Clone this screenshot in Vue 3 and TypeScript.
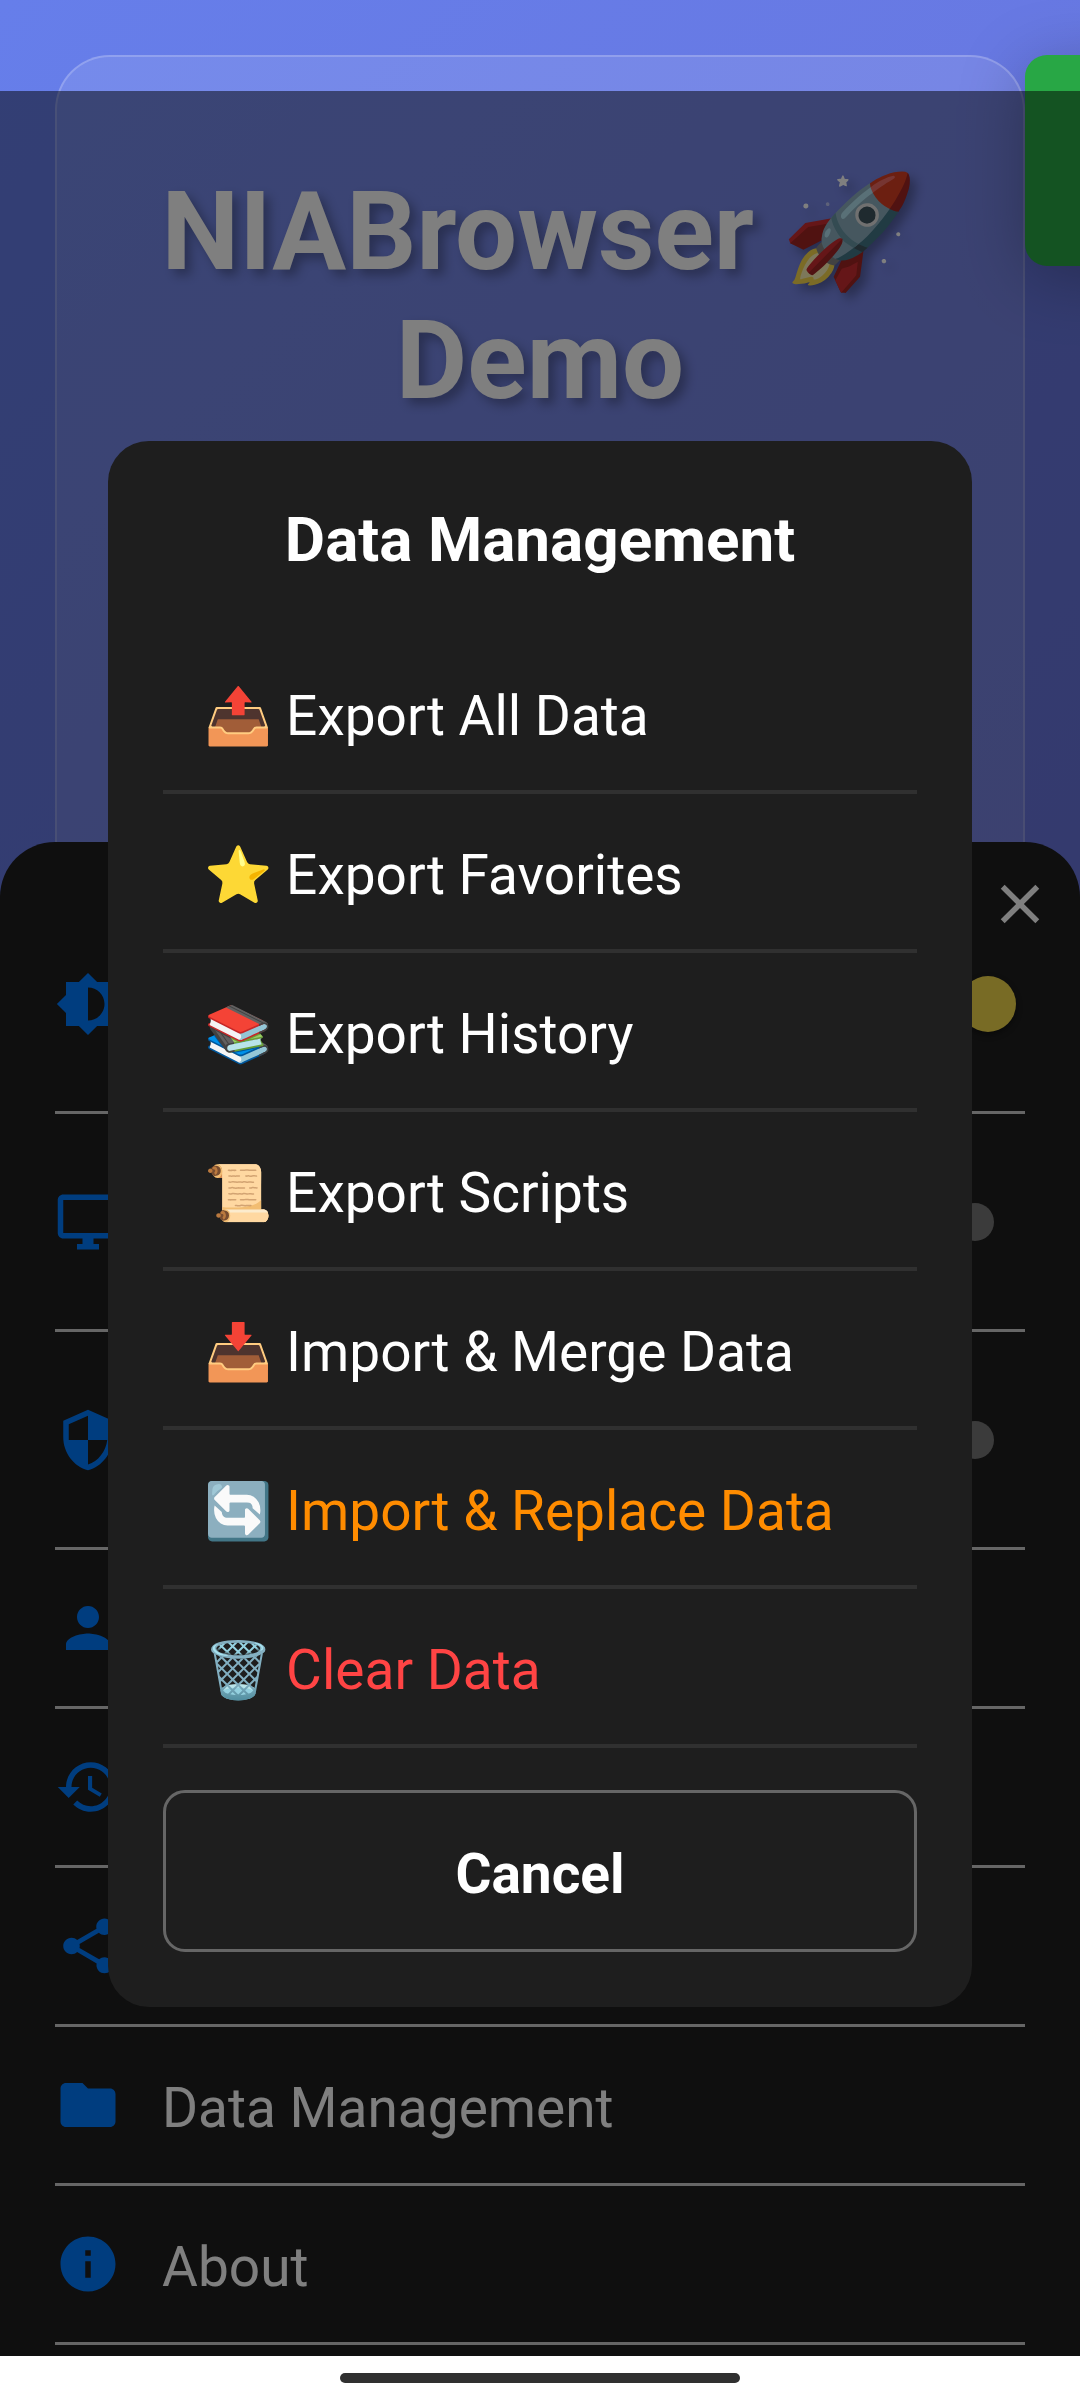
<script setup lang="ts">
interface SheetRow {
  name: string
  icon: string
  toggle?: 'on' | 'off'
  label?: string
}

interface DataAction {
  emoji: string
  label: string
  tone?: 'warn' | 'danger'
}

const rows: SheetRow[] = [
  {
    name: 'Brightness',
    toggle: 'on',
    icon: 'M20 15.31L23.31 12 20 8.69V4h-4.69L12 .69 8.69 4H4v4.69L.69 12 4 15.31V20h4.69L12 23.31 15.31 20H20v-4.69zM12 18V6c3.31 0 6 2.69 6 6s-2.69 6-6 6z',
  },
  {
    name: 'Desktop',
    toggle: 'off',
    icon: 'M21 2H3c-1.1 0-2 .9-2 2v12c0 1.1.9 2 2 2h7v2H8v2h8v-2h-2v-2h7c1.1 0 2-.9 2-2V4c0-1.1-.9-2-2-2zm0 14H3V4h18v12z',
  },
  {
    name: 'Security',
    toggle: 'off',
    icon: 'M12 1L3 5v6c0 5.55 3.84 10.74 9 12 5.16-1.26 9-6.45 9-12V5l-9-4zm0 10.99h7c-.53 4.12-3.28 7.79-7 8.94V12H5V6.3l7-3.11v8.8z',
  },
  {
    name: 'Person',
    icon: 'M12 12c2.21 0 4-1.79 4-4s-1.79-4-4-4-4 1.79-4 4 1.79 4 4 4zm0 2c-2.67 0-8 1.34-8 4v2h16v-2c0-2.66-5.33-4-8-4z',
  },
  {
    name: 'History',
    icon: 'M13 3c-4.97 0-9 4.03-9 9H1l3.89 3.89.07.14L9 12H6c0-3.87 3.13-7 7-7s7 3.13 7 7-3.13 7-7 7c-1.93 0-3.68-.79-4.94-2.06l-1.42 1.42C8.27 19.99 10.51 21 13 21c4.97 0 9-4.03 9-9s-4.03-9-9-9zm-1 5v5l4.28 2.54.72-1.21-3.5-2.08V8H12z',
  },
  {
    name: 'Share',
    icon: 'M18 16.08c-.76 0-1.44.3-1.96.77L8.91 12.7c.05-.23.09-.46.09-.7s-.04-.47-.09-.7l7.05-4.11c.54.5 1.25.81 2.04.81 1.66 0 3-1.34 3-3s-1.34-3-3-3-3 1.34-3 3c0 .24.04.47.09.7L8.04 9.81C7.5 9.31 6.79 9 6 9c-1.66 0-3 1.34-3 3s1.34 3 3 3c.79 0 1.5-.31 2.04-.81l7.12 4.16c-.05.21-.08.43-.08.65 0 1.61 1.31 2.92 2.92 2.92s2.92-1.31 2.92-2.92-1.31-2.92-2.92-2.92z',
  },
  {
    name: 'Data Management',
    label: 'Data Management',
    icon: 'M10 4H4c-1.1 0-1.99.9-1.99 2L2 18c0 1.1.9 2 2 2h16c1.1 0 2-.9 2-2V8c0-1.1-.9-2-2-2h-8l-2-2z',
  },
  {
    name: 'About',
    label: 'About',
    icon: 'M12 2C6.48 2 2 6.48 2 12s4.48 10 10 10 10-4.48 10-10S17.52 2 12 2zm1 15h-2v-6h2v6zm0-8h-2V7h2v2z',
  },
]

const actions: DataAction[] = [
  { emoji: '📤', label: 'Export All Data' },
  { emoji: '⭐', label: 'Export Favorites' },
  { emoji: '📚', label: 'Export History' },
  { emoji: '📜', label: 'Export Scripts' },
  { emoji: '📥', label: 'Import & Merge Data' },
  { emoji: '🔄', label: 'Import & Replace Data', tone: 'warn' },
  { emoji: '🗑️', label: 'Clear Data', tone: 'danger' },
]
</script>

<template>
  <div class="screen">
    <div class="stage">
      <main class="web">
        <section class="card">
          <h1>NIABrowser 🚀 Demo</h1>
        </section>
        <div class="status"></div>
      </main>

      <section class="sheet">
        <button class="close" type="button" aria-label="Close">
          <svg class="icon" viewBox="0 0 24 24"><path d="M19 6.41L17.59 5 12 10.59 6.41 5 5 6.41 10.59 12 5 17.59 6.41 19 12 13.41 17.59 19 19 17.59 13.41 12z" /></svg>
        </button>
        <template v-for="row in rows" :key="row.name">
          <label v-if="row.toggle" class="row tall">
            <svg class="icon" viewBox="0 0 24 24"><path :d="row.icon" /></svg>
            <input
              class="switch"
              type="checkbox"
              role="switch"
              :aria-label="row.name"
              :checked="row.toggle === 'on'"
            />
          </label>
          <button v-else class="row" type="button" :aria-label="row.name">
            <svg class="icon" viewBox="0 0 24 24"><path :d="row.icon" /></svg>
            <span v-if="row.label">{{ row.label }}</span>
          </button>
        </template>
      </section>

      <div class="overlay">
        <div class="dialog" role="dialog" aria-modal="true" aria-labelledby="dialog-title">
          <h2 id="dialog-title">Data Management</h2>
          <ul>
            <li v-for="action in actions" :key="action.label">
              <button class="action" :class="action.tone" type="button">{{ action.emoji }} {{ action.label }}</button>
            </li>
          </ul>
          <button class="cancel" type="button">Cancel</button>
        </div>
      </div>
    </div>
    <div class="navbar"><div class="handle"></div></div>
  </div>
</template>

<style>
body {
  margin: 0;
  background: #fff;
}
</style>

<style scoped>
.screen {
  display: flex;
  flex-direction: column;
  min-height: 100vh;
  font-family: Roboto, "Noto Color Emoji", sans-serif;
  overflow: hidden;
}

button {
  font: inherit;
  color: inherit;
  background: none;
  border: 0;
  padding: 0;
  margin: 0;
}

.stage {
  flex: 1;
  display: grid;
  grid-template-columns: minmax(0, 1fr);
  overflow: hidden;
  background: linear-gradient(135deg, #667eea, #764ba2) no-repeat 0 0 / 100% 9500px;
}

.stage > * {
  grid-area: 1 / 1;
}

.web {
  position: relative;
  display: flex;
  padding: 55px 55px 0;
}

.card {
  flex: 1;
  padding: 110px 82px;
  border: 2px solid rgba(255, 255, 255, 0.2);
  border-radius: 55px;
  background: rgba(255, 255, 255, 0.1);
}

h1 {
  margin: 0;
  font-size: 110px;
  line-height: 129px;
  font-weight: 700;
  text-align: center;
  color: #fff;
  text-shadow: 6px 6px 11px rgba(0, 0, 0, 0.3);
}

/* Notification sliding in from the right edge */
.status {
  position: absolute;
  top: 55px;
  left: calc(100% - 55px);
  width: 220px;
  height: 211px;
  border-radius: 22px;
  background: #28a745;
  box-shadow: 0 11px 66px rgba(0, 0, 0, 0.25);
}

.sheet {
  position: relative;
  align-self: end;
  display: flex;
  flex-direction: column;
  padding: 54px 55px 11px;
  border-radius: 55px 55px 0 0;
  background: #1e1e1e;
  color: #fff;
}

.icon {
  flex: none;
  display: block;
  width: 66px;
  height: 66px;
  fill: currentColor;
}

.close {
  position: absolute;
  top: 29px;
  right: 27px;
}

.row {
  display: flex;
  align-items: center;
  gap: 41px;
  padding: 45px 0;
  border-bottom: 3px solid #ccc;
  font-size: 55px;
  line-height: 66px;
  text-align: left;
}

.row .icon {
  color: #007aff;
}

.row.tall {
  padding: 75px 0 74px;
}

.row span {
  padding-top: 6px;
  line-height: 60px;
}

.switch {
  appearance: none;
  display: flex;
  align-items: center;
  width: 128px;
  height: 66px;
  margin: 0 9px 0 auto;
}

.switch::before {
  content: "";
  width: 38px;
  height: 38px;
  margin-left: 68px;
  border-radius: 50%;
  background: #767676;
}

.switch:checked::before {
  width: 56px;
  height: 56px;
  margin-left: 72px;
  background: #f0d64a;
  box-shadow: 0 3px 6px rgba(0, 0, 0, 0.4);
}

.overlay {
  z-index: 1;
  display: flex;
  align-items: center;
  justify-content: center;
  margin-top: 91px;
  background: rgba(0, 0, 0, 0.5);
}

.dialog {
  box-sizing: border-box;
  width: 80%;
  padding: 55px;
  border-radius: 41px;
  background: #1e1e1e;
  color: #fff;
}

h2 {
  margin: 0 0 51px;
  font-size: 62px;
  line-height: 88px;
  font-weight: 700;
  text-align: center;
}

ul {
  list-style: none;
  margin: 0 0 42px;
  padding: 0;
}

li {
  border-bottom: 4px solid #303030;
}

.action {
  display: block;
  width: 100%;
  padding: 49px 41px 42px;
  font-size: 55px;
  line-height: 64px;
  text-align: left;
  white-space: nowrap;
}

.warn {
  color: #ff8c00;
}

.danger {
  color: #ff4444;
}

.cancel {
  width: 100%;
  padding: 49px 46px 43px;
  border: 3px solid #666;
  border-radius: 22px;
  font-size: 55px;
  line-height: 64px;
  font-weight: 700;
}

.navbar {
  display: flex;
  justify-content: center;
  align-items: center;
  height: 44px;
  background: #fff;
}

.handle {
  width: 37%;
  height: 10px;
  border-radius: 5px;
  background: #303030;
}
</style>
